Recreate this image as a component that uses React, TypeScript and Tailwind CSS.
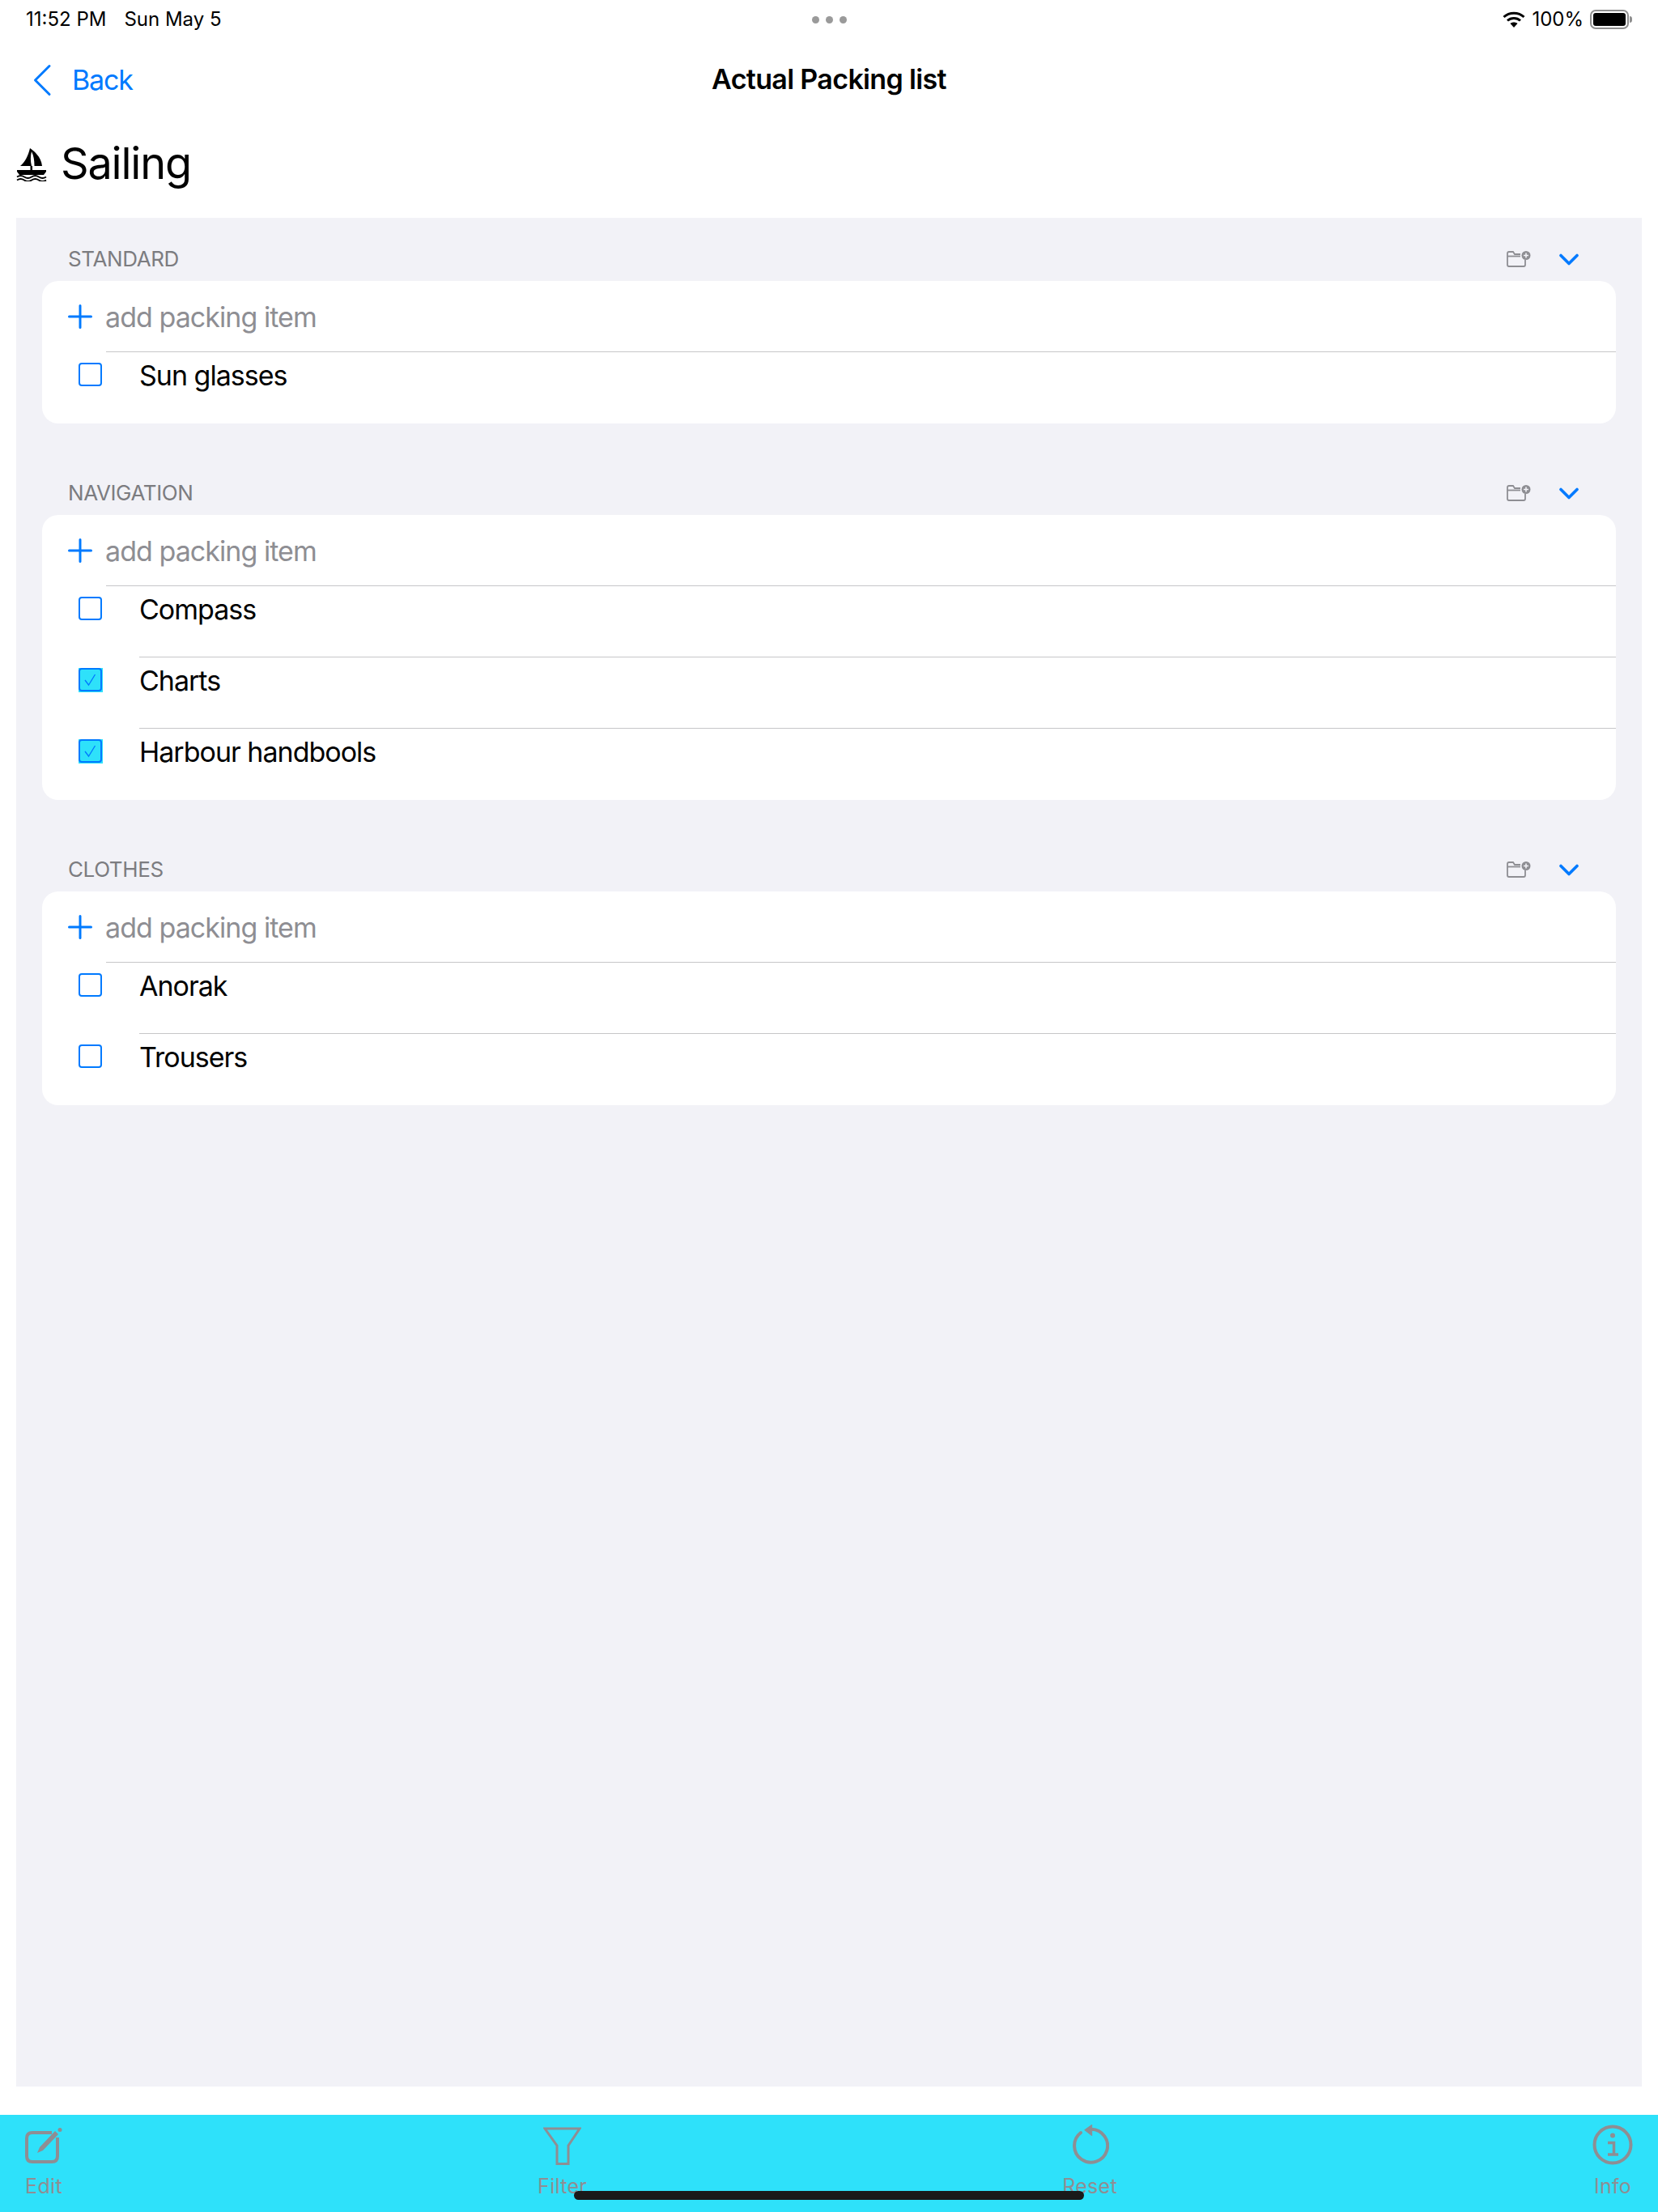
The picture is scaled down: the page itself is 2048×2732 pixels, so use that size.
import React from 'react'

const SECTIONS = [
  { title: "STANDARD", items: [{ name: "Sun glasses", done: false }] },
  {
    title: "NAVIGATION",
    items: [
      { name: "Compass", done: false },
      { name: "Charts", done: true },
      { name: "Harbour handbools", done: true },
    ],
  },
  {
    title: "CLOTHES",
    items: [
      { name: "Anorak", done: false },
      { name: "Trousers", done: false },
    ],
  },
]

const SailboatIcon = () => (
  <svg width="38" height="42" viewBox="0 0 38 42" fill="none" className="shrink-0">
    <path d="M17 1 C21 4 31 11 32 23 L5 23 C11 18 15 10 17 1 Z" fill="#000" />
    <path d="M19 5 C17.500 11 17.500 17 19 23 L22.500 23 C22.500 16 21.500 10 19 5 Z" fill="#fff" />
    <path d="M17.500 23 H20 V28 H17.500 Z" fill="#000" />
    <path d="M1 28 H37 V30 L34 34 H4 L1 30 Z" fill="#000" />
    <path d="M1 36.500 C4 34.500 7 34.500 10 36.500 C13 38.500 16 38.500 19 36.500 C22 34.500 25 34.500 28 36.500 C31 38.500 34 38.500 37 36.500" stroke="#000" strokeWidth="1.800" />
    <path d="M1 40.500 C4 38.500 7 38.500 10 40.500 C13 42.500 16 42.500 19 40.500 C22 38.500 25 38.500 28 40.500 C31 42.500 34 42.500 37 40.500" stroke="#000" strokeWidth="1.800" />
  </svg>
)

const WifiIcon = () => (
  <svg width="28" height="20" viewBox="0 0 28 20" fill="none">
    <path d="M1.500 7 C8.500 0.500 19.500 0.500 26.500 7" stroke="#000" strokeWidth="3" />
    <path d="M6 11.500 C10.500 7.500 17.500 7.500 22 11.500" stroke="#000" strokeWidth="3" />
    <path d="M14 20 L9.500 15 C12 13 16 13 18.500 15 Z" fill="#000" />
  </svg>
)

const BatteryIcon = () => (
  <div className="flex items-center">
    <div className="w-[48px] h-[24px] rounded-[7px] border-[2px] border-[#8f8f8f] p-[2px]">
      <div className="w-full h-full rounded-[3px] bg-black" />
    </div>
    <div className="w-[3px] h-[8px] ml-[1px] rounded-r-[3px] bg-[#8f8f8f]" />
  </div>
)

const BackChevron = () => (
  <svg width="24" height="40" viewBox="0 0 24 40" fill="none">
    <path d="M21 2.500 L3.500 20 L21 37.500" stroke="#007aff" strokeWidth="3" strokeLinecap="round" strokeLinejoin="round" />
  </svg>
)

const FolderPlusIcon = () => (
  <svg width="30" height="20" viewBox="0 0 30 20" fill="none">
    <path d="M17 4 H10 L8 1 H3 Q1 1 1 3 V17 Q1 19 3 19 H21 Q23 19 23 17 V11" stroke="#8e8e93" strokeWidth="1.800" />
    <path d="M1 6.500 H17" stroke="#8e8e93" strokeWidth="1.800" />
    <circle cx="24" cy="5.500" r="5.500" fill="#8e8e93" />
    <path d="M24 2.500 V8.500 M21 5.500 H27" stroke="#f2f2f7" strokeWidth="1.600" />
  </svg>
)

const ChevronIcon = () => (
  <svg width="24" height="15" viewBox="0 0 24 15" fill="none">
    <path d="M2 2.500 L12 12.500 L22 2.500" stroke="#007aff" strokeWidth="3.600" strokeLinecap="round" strokeLinejoin="round" />
  </svg>
)

const PlusIcon = () => (
  <svg width="30" height="30" viewBox="0 0 30 30" fill="none" className="shrink-0">
    <path d="M15 1.500 V28.500 M1.500 15 H28.500" stroke="#007aff" strokeWidth="3" strokeLinecap="round" />
  </svg>
)

const CheckBox = ({ done }: { done: boolean }) => (
  <div className={`w-[30px] h-[30px] shrink-0 flex items-start justify-start ${done ? "bg-[#2ee1fa]" : ""}`}>
    <div className="w-[29px] h-[29px] rounded-[4px] border-[2px] border-[#007aff] flex items-center justify-center">
      {done && (
        <svg width="17" height="17" viewBox="0 0 17 17" fill="none">
          <path d="M2 9 L6.500 15 L14.500 2" stroke="#007aff" strokeWidth="1.300" />
        </svg>
      )}
    </div>
  </div>
)

const EditIcon = () => (
  <svg width="46" height="46" viewBox="0 0 46 46" fill="none">
    <path d="M33 6 H9 Q2 6 2 13 V35 Q2 42 9 42 H33 Q40 42 40 35 V12" stroke="#8e8e93" strokeWidth="4" />
    <path d="M15 31 L18 24 L37 4 L41 8 L22 28 Z" fill="#8e8e93" />
    <circle cx="43" cy="2.500" r="2.500" fill="#8e8e93" />
  </svg>
)

const FilterIcon = () => (
  <svg width="47" height="47" viewBox="0 0 47 47" fill="none">
    <path d="M2 2 H45 L31 23 V45.500 H17 V23 Z" stroke="#8e8e93" strokeWidth="3" />
  </svg>
)

const ResetIcon = () => (
  <svg width="48" height="50" viewBox="0 0 48 50" fill="none">
    <path d="M13 10 A 20.500 20.500 0 1 0 26 5.700" stroke="#8e8e93" strokeWidth="4" strokeLinecap="round" />
    <path d="M17.700 6.700 L26.700 0.300 L26.700 13.700 Z" fill="#8e8e93" stroke="#8e8e93" strokeWidth="1" strokeLinejoin="round" />
  </svg>
)

const InfoIcon = () => (
  <svg width="50" height="50" viewBox="0 0 50 50" fill="none">
    <circle cx="25" cy="25" r="22.500" stroke="#8e8e93" strokeWidth="4" />
    <circle cx="25" cy="13.500" r="3" fill="#8e8e93" />
    <path d="M19 22.500 H26.500 V36 M19 37 H32" stroke="#8e8e93" strokeWidth="3.500" />
  </svg>
)

const TabItem = ({ label, children }: { label: string; children: React.ReactNode }) => (
  <div className="flex flex-col items-center">
    <div className="h-[62px] flex items-end justify-center">{children}</div>
    <span className="text-[25px] leading-[29px] mt-[12px] text-[#8e8e93] tracking-[0.300px]">{label}</span>
  </div>
)

const App = () => {
  return (
    <div className="w-[2048px] h-[2732px] relative flex flex-col bg-white overflow-hidden font-['Inter','Liberation_Sans',sans-serif]">
      {/* status bar */}
      <div className="h-[48px] px-[32px] flex items-center shrink-0 text-[24px]">
        <div className="flex-1 flex gap-[22px] text-black">
          <span>11:52 PM</span>
          <span>Sun May 5</span>
        </div>
        <div className="flex items-center gap-[8px]">
          <div className="w-[9px] h-[9px] rounded-full bg-[#9a9a9a]" />
          <div className="w-[9px] h-[9px] rounded-full bg-[#9a9a9a]" />
          <div className="w-[9px] h-[9px] rounded-full bg-[#9a9a9a]" />
        </div>
        <div className="flex-1 flex items-center justify-end gap-[8px]">
          <WifiIcon />
          <span>100%</span>
          <BatteryIcon />
        </div>
      </div>

      {/* nav bar */}
      <div className="h-[102px] relative flex items-center justify-center shrink-0">
        <div className="absolute left-[40px] top-[25px] flex items-center gap-[25px] text-[#007aff] text-[34px] tracking-[-1.200px]">
          <BackChevron />
          <span>Back</span>
        </div>
        <h1 className="text-[34px] font-semibold text-black tracking-[-0.650px] -translate-y-[2px]">Actual Packing list</h1>
      </div>

      {/* title */}
      <div className="h-[119px] pl-[20px] pt-[19px] flex items-start gap-[17px] shrink-0">
        <div className="pt-[13px]"><SailboatIcon /></div>
        <h2 className="text-[54px] leading-[66px] text-black tracking-[-1.200px]">Sailing</h2>
      </div>

      {/* sections */}
      <div className="mx-[20px] h-[2308px] bg-[#f2f2f7] px-[32px] pt-[28px] flex flex-col gap-[63px] shrink-0">
        {SECTIONS.map((section) => (
          <div key={section.title}>
            <div className="h-[50px] pl-[32px] pr-[46px] flex items-start justify-between">
              <span className="text-[26px] leading-[32px] pt-[7px] text-[#7c7c80] tracking-[-0.400px]">{section.title}</span>
              <div className="flex items-center gap-[35px] pt-[13px]">
                <FolderPlusIcon />
                <ChevronIcon />
              </div>
            </div>
            <div className="bg-white rounded-[20px] overflow-hidden">
              <div className="h-[88px] pl-[32px] flex items-center gap-[16px] relative">
                <PlusIcon />
                <span className="text-[34px] text-[#8e8e93] tracking-[-0.950px]">add packing item</span>
                <div className="absolute left-[79px] right-0 bottom-0 h-[1px] bg-[#c6c6c8]" />
              </div>
              {section.items.map((item, i) => (
                <div key={item.name} className="h-[88px] pl-[45px] flex items-start gap-[45px] relative">
                  <div className="pt-[13px]"><CheckBox done={item.done} /></div>
                  <span className="text-[34px] leading-[58px] text-black tracking-[-1px]">{item.name}</span>
                  {i < section.items.length - 1 && (
                    <div className="absolute left-[120px] right-0 bottom-0 h-[1px] bg-[#c6c6c8]" />
                  )}
                </div>
              ))}
            </div>
          </div>
        ))}
      </div>

      {/* tab bar */}
      <div className="absolute left-0 right-0 bottom-0 h-[120px] bg-[#2ee1fa] px-[31px] flex justify-between">
        <TabItem label="Edit"><EditIcon /></TabItem>
        <TabItem label="Filter"><FilterIcon /></TabItem>
        <TabItem label="Reset"><ResetIcon /></TabItem>
        <TabItem label="Info"><InfoIcon /></TabItem>
      </div>

      {/* home indicator */}
      <div className="absolute left-[709px] bottom-[15px] w-[630px] h-[11px] rounded-full bg-[#1a1a1a]" />
    </div>
  )
}

export default App
